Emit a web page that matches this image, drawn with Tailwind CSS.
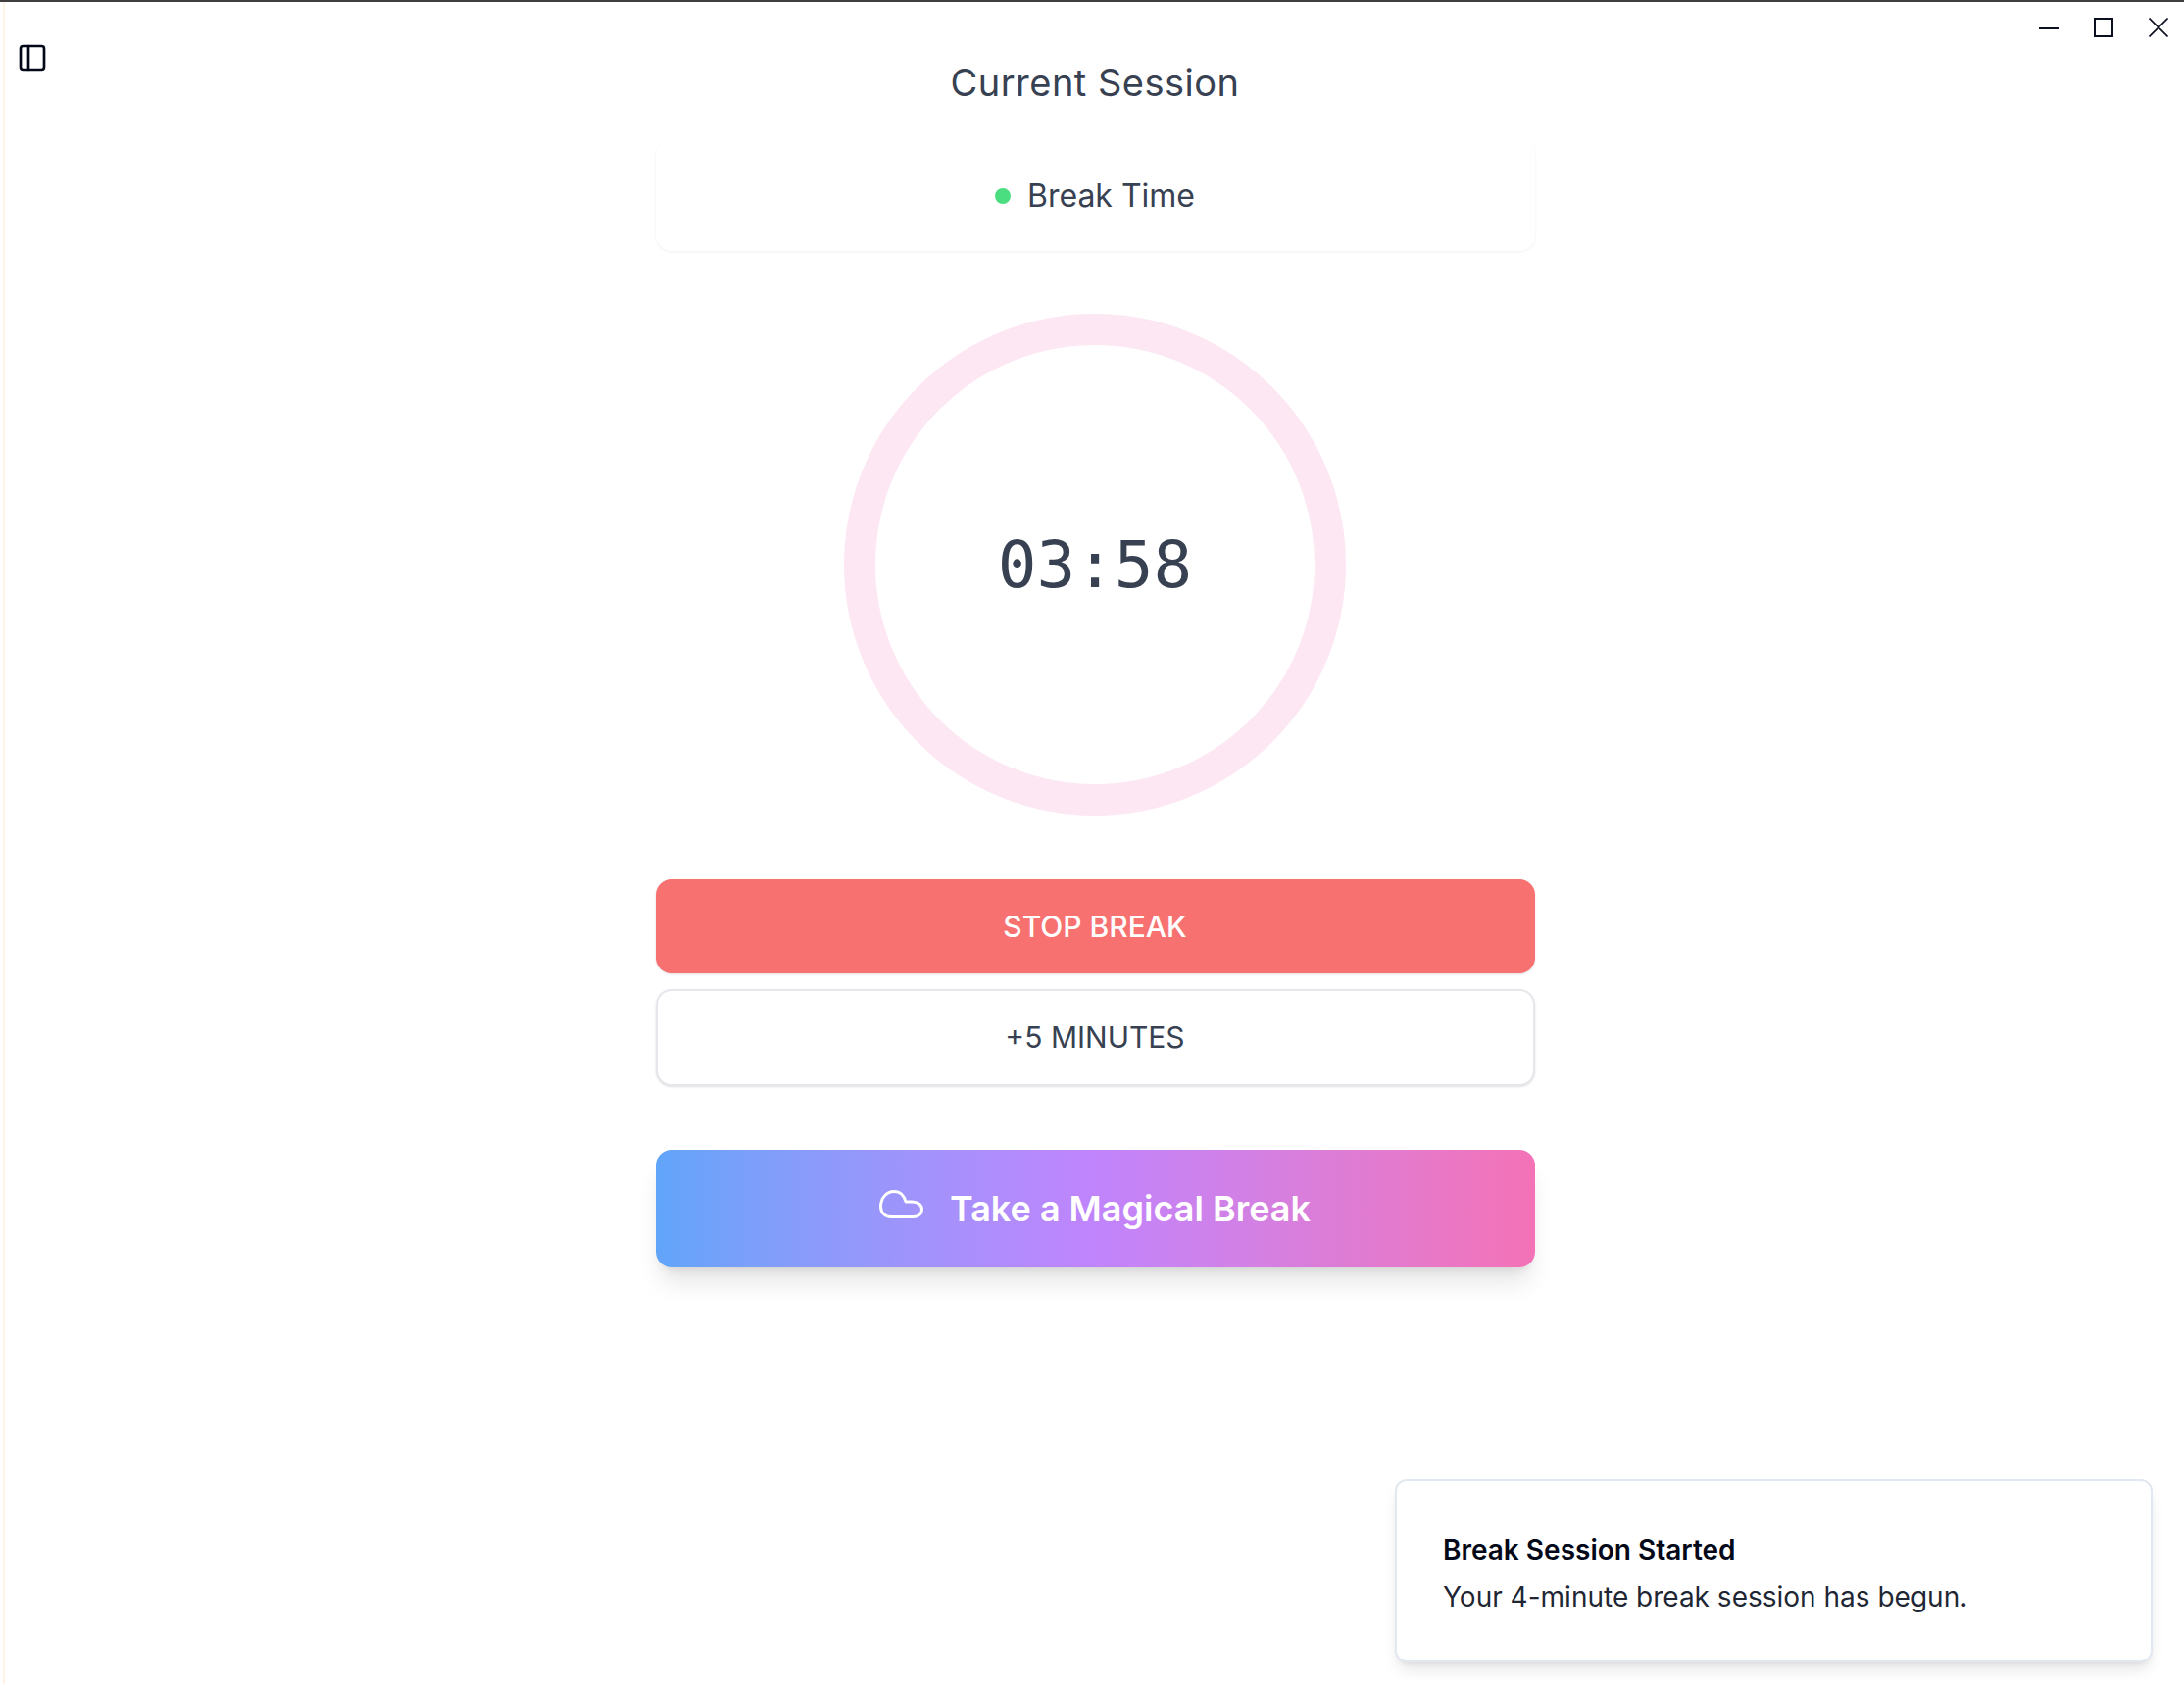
<!DOCTYPE html>
<html lang="en">
<head>
  <meta charset="UTF-8">
  <title>Current Session</title>
  <script src="https://cdn.jsdelivr.net/npm/@tailwindcss/browser@4"></script>
</head>
<body class="bg-white font-['Inter',sans-serif]">
  <div class="relative h-[1718px] w-[2228px] overflow-hidden border-t-2 border-[#3f3f3f] bg-white">
    <!-- left edge -->
    <div class="absolute left-[3px] top-0 bottom-0 w-[2px] bg-[#fdf3e6]"></div>

    <!-- sidebar toggle -->
    <svg class="absolute left-[17px] top-[41px] h-8 w-8 text-[#020817]" viewBox="0 0 24 24" fill="none" stroke="currentColor" stroke-width="2" stroke-linecap="round" stroke-linejoin="round">
      <rect x="3" y="3" width="18" height="18" rx="2"></rect>
      <path d="M9 3v18"></path>
    </svg>

    <!-- window controls -->
    <div class="absolute right-[16px] top-[16px] flex items-center gap-[36px] text-[#0b1020]">
      <svg class="h-[20px] w-[20px]" viewBox="0 0 20 20" fill="none" stroke="currentColor" stroke-width="2"><path d="M0 11h20"></path></svg>
      <svg class="h-[20px] w-[20px]" viewBox="0 0 20 20" fill="none" stroke="currentColor" stroke-width="2"><rect x="1" y="1" width="18" height="18"></rect></svg>
      <svg class="h-[20px] w-[20px]" viewBox="0 0 20 20" fill="none" stroke="currentColor" stroke-width="1.6"><path d="M0.5 0.5l19 19M19.5 0.5l-19 19"></path></svg>
    </div>

    <main class="ml-[6px] flex flex-col items-center pt-[56px]">
      <h1 class="text-[38px] leading-[52px] tracking-[0.5px] text-[#374151]">Current Session</h1>

      <div class="mt-[33px] flex h-[113px] w-[897px] items-center justify-center gap-[17px] rounded-[16px] bg-white shadow-[0_1px_3px_rgba(0,0,0,0.06)]">
        <span class="h-[16px] w-[16px] rounded-full bg-[#4ade80]"></span>
        <span class="text-[32px] text-[#374151]">Break Time</span>
      </div>

      <div class="mt-[64px] flex h-[512px] w-[512px] items-center justify-center rounded-full border-[32px] border-[#fce7f3]">
        <span class="font-['DejaVu_Sans_Mono',monospace] text-[66px] text-[#374151]">03:58</span>
      </div>

      <div class="mt-[65px] flex w-[897px] flex-col">
        <button class="h-[96px] rounded-[16px] bg-[#f87171] text-[30px] font-medium text-white shadow-sm">STOP BREAK</button>
        <button class="mt-[16px] h-[99px] rounded-[16px] border-2 border-[#e5e7eb] bg-white text-[30px] text-[#374151] shadow-sm">+5 MINUTES</button>
        <button class="mt-[65px] flex h-[120px] items-center justify-center gap-[26px] rounded-[16px] bg-gradient-to-r from-[#60a5fa] via-[#c084fc] to-[#f472b6] text-[36px] font-semibold text-white shadow-[0_20px_25px_-5px_rgba(0,0,0,0.1),0_8px_10px_-6px_rgba(0,0,0,0.1)]">
          <svg class="mb-[8px] h-[30px] w-[46px]" viewBox="0 0 46 30" fill="none" stroke="currentColor" stroke-width="3" stroke-linecap="round" stroke-linejoin="round">
            <path d="M35 27.5H12C5.8 27.5 1.5 23 1.5 17C1.5 8 7.5 1.5 15 1.5C21 1.5 25.5 5.8 27 12H33.5C39.5 12 43.5 15.5 43.5 19.8C43.5 24.5 39.8 27.5 35 27.5Z"></path>
          </svg>
          <span>Take a Magical Break</span>
        </button>
      </div>
    </main>

    <!-- toast -->
    <div class="absolute right-[32px] top-[1507px] h-[187px] w-[773px] rounded-[12px] border-2 border-[#e2e8f0] bg-white px-[47px] pt-[50px] shadow-[0_10px_15px_-3px_rgba(0,0,0,0.1),0_4px_6px_-4px_rgba(0,0,0,0.1)]">
      <div class="text-[28px] leading-[40px] font-semibold text-[#020817]">Break Session Started</div>
      <div class="mt-[8px] text-[28px] leading-[40px] text-[#020817]/90">Your 4-minute break session has begun.</div>
    </div>
  </div>
</body>
</html>
